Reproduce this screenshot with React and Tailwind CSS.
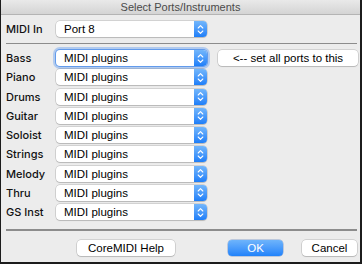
import React from "react";

const Stepper = () => (
  <div className="flex h-full w-[13px] items-center justify-center rounded-r-[4px] bg-gradient-to-b from-[#72b6fb] to-[#1c7ef8]">
    <svg width="7" height="11" viewBox="0 0 7 11" fill="none">
      <path d="M1.2 4 L3.5 1.7 L5.8 4" stroke="white" strokeWidth="1.1" strokeLinecap="round" strokeLinejoin="round" />
      <path d="M1.2 7 L3.5 9.3 L5.8 7" stroke="white" strokeWidth="1.1" strokeLinecap="round" strokeLinejoin="round" />
    </svg>
  </div>
);

const Popup = ({ text, focus }) => (
  <div
    className={
      "flex h-[16px] w-[151px] shrink-0 rounded-[4px] bg-white " +
      (focus
        ? "shadow-[0_0_0_1px_rgba(90,150,235,0.9),0_0_0_3px_rgba(130,175,240,0.55)]"
        : "shadow-[0_0_0_0.5px_rgba(0,0,0,0.22),0_1px_1px_rgba(0,0,0,0.12)]")
    }
  >
    <span className="flex-1 pl-[8px] text-[11.5px] leading-[16px] text-black">{text}</span>
    <Stepper />
  </div>
);

const Label = ({ children }) => (
  <span className="w-[50px] shrink-0 font-['Inter'] text-[11px] font-medium leading-[16px] text-[#111]">
    {children}
  </span>
);

const Btn = ({ children, w, primary }) => (
  <div
    className={
      "flex h-[16px] items-center justify-center rounded-[4px] text-[11.5px] leading-[16px] " +
      w +
      (primary
        ? " bg-gradient-to-b from-[#6eb4fb] to-[#1f82fa] text-white shadow-[0_0_0_0.5px_rgba(0,60,160,0.4)]"
        : " bg-white text-black shadow-[0_0_0_0.5px_rgba(0,0,0,0.22),0_1px_1px_rgba(0,0,0,0.12)]")
    }
  >
    {children}
  </div>
);

const rows = ["Bass", "Piano", "Drums", "Guitar", "Soloist", "Strings", "Melody", "Thru", "GS Inst"];

export default function App() {
  return (
    <div className="flex h-[264px] w-[362px] flex-col border-b-2 border-l border-r-2 border-[#1c1c1c] bg-[#ececec] font-['Liberation_Sans',sans-serif]">
      <div className="h-[15px] shrink-0 border-b border-[#b4b4b4] bg-gradient-to-b from-[#e9e9e9] to-[#d4d4d4] text-center text-[11px] leading-[14px] text-[#4a4a4a]">
        Select Ports/Instruments
      </div>
      <div className="flex flex-1 flex-col pl-[5px] pr-[3px]">
        <div className="mt-[6px] flex items-center">
          <Label>MIDI In</Label>
          <Popup text="Port 8" />
        </div>
        <div className="mt-[6px] h-px bg-[#8c8c8c]" />
        <div className="mt-[6px] flex flex-col gap-[3.25px]">
          {rows.map((r, i) => (
            <div key={r} className="flex items-center">
              <Label>{r}</Label>
              <Popup text="MIDI plugins" focus={i === 0} />
              {i === 0 && (
                <div className="ml-[11px] flex-1">
                  <Btn w="w-[140px]">&lt;-- set all ports to this</Btn>
                </div>
              )}
            </div>
          ))}
        </div>
        <div className="mt-[9px] h-[2px] bg-[#8c8c8c]" />
        <div className="mt-[9px] flex items-center pl-[71px]">
          <Btn w="w-[98px]">CoreMIDI Help</Btn>
          <div className="ml-auto flex gap-[19px]">
            <Btn w="w-[55px]" primary>OK</Btn>
            <Btn w="w-[55px]">Cancel</Btn>
          </div>
        </div>
      </div>
    </div>
  );
}
